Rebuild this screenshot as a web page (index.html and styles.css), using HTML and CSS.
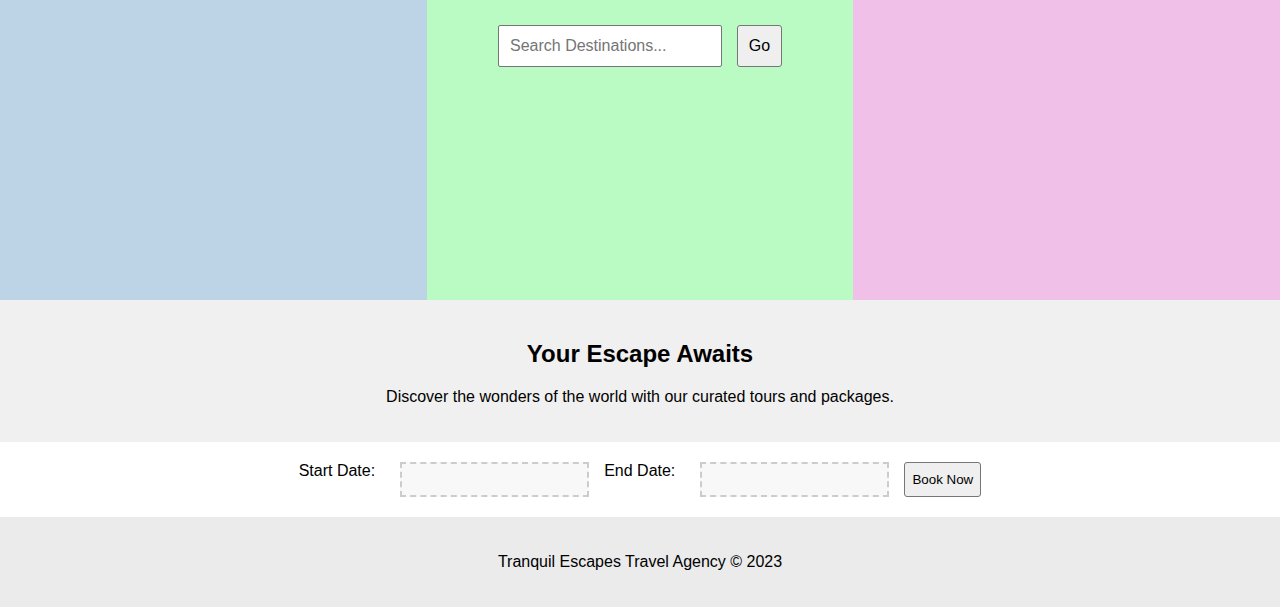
FILE: index.html
```html
<!DOCTYPE html>
<html lang="en">
<head>
<meta charset="utf-8">
<title>Tranquil Escapes</title>
<link rel="stylesheet" href="styles.css">
</head>
<body>
<section class="hero">
  <div class="col col-blue"></div>
  <div class="col col-green">
    <form class="search">
      <input class="search-input" type="text" placeholder="Search Destinations...">
      <button class="go-btn" type="button">Go</button>
    </form>
  </div>
  <div class="col col-pink"></div>
</section>
<section class="intro">
  <h2 class="intro-title">Your Escape Awaits</h2>
  <p class="intro-text">Discover the wonders of the world with our curated tours and packages.</p>
</section>
<section class="booking">
  <label class="b-label">Start Date:</label>
  <div class="date-box"></div>
  <label class="b-label">End Date:</label>
  <div class="date-box"></div>
  <button class="book-btn" type="button">Book Now</button>
</section>
<footer class="footer">
  <p class="footer-text">Tranquil Escapes Travel Agency © 2023</p>
</footer>
</body>
</html>
```
FILE: styles.css
```css
* { box-sizing: border-box; }
html, body { margin: 0; padding: 0; }
body {
  font-family: "Liberation Sans", Arial, sans-serif;
  font-size: 16px;
  color: #000;
  background: #fff;
}
.hero {
  display: grid;
  grid-template-columns: 1fr 1fr 1fr;
  height: 300px;
}
.col-blue { background: #bdd4e7; }
.col-green { background: #bafbc3; }
.col-pink { background: #f0c0e8; }
.search {
  display: flex;
  justify-content: center;
  gap: 15px;
  padding-top: 25px;
  margin: 0;
}
.search-input {
  width: 224px;
  height: 42px;
  padding: 0 11px;
  font-family: "Liberation Sans", Arial, sans-serif;
  font-size: 16px;
  border: 1px solid #767676;
  border-radius: 2px;
  background: #fff;
  color: #000;
}
.search-input::placeholder { color: #757575; }
.go-btn {
  width: 45px;
  height: 42px;
  padding: 0;
  font-family: "Liberation Sans", Arial, sans-serif;
  font-size: 16px;
  color: #000;
  background: #efefef;
  border: 1px solid #767676;
  border-radius: 3px;
}
.intro {
  background: #f0f0f0;
  padding: 20px;
  text-align: center;
}
.intro-title {
  font-size: 24px;
  font-weight: bold;
  margin: 20px 0;
}
.intro-text {
  margin: 16px 0;
}
.booking {
  display: flex;
  justify-content: center;
  align-items: stretch;
  gap: 15px;
  padding: 20px;
  background: #fff;
}
.b-label {
  margin-right: 10px;
  line-height: 18px;
}
.date-box {
  width: 189px;
  height: 35px;
  border: 2px dashed #ccc;
  background: #f8f8f8;
}
.book-btn {
  width: 77px;
  height: 35px;
  padding: 0;
  font-family: "Liberation Sans", Arial, sans-serif;
  font-size: 13.33px;
  color: #000;
  background: #efefef;
  border: 1px solid #767676;
  border-radius: 3px;
}
.footer {
  background: #ebebeb;
  padding: 20px;
  text-align: center;
}
.footer-text { margin: 16px 0; }
```
